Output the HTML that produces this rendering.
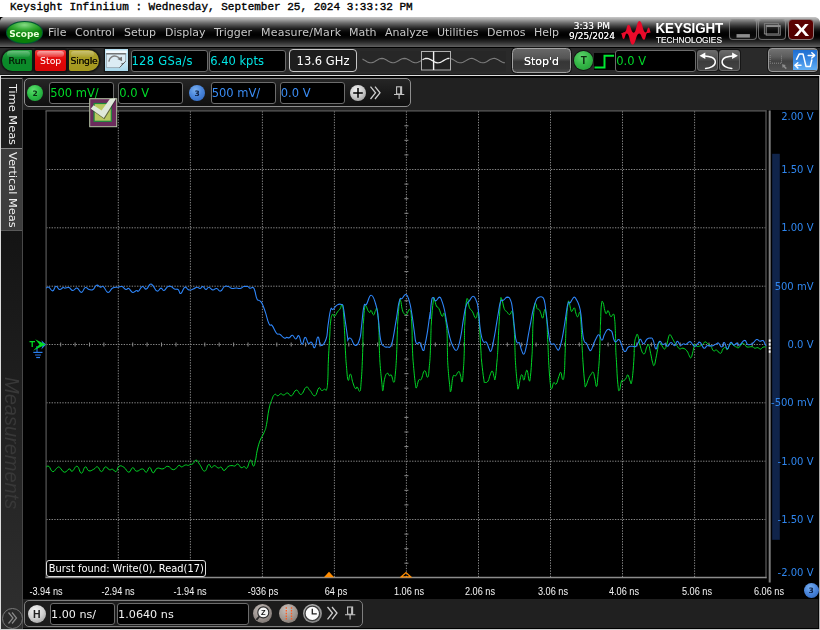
<!DOCTYPE html>
<html>
<head>
<meta charset="utf-8">
<title>Keysight Infiniium</title>
<style>
html,body{margin:0;padding:0;background:#000;}
body{width:820px;height:630px;overflow:hidden;position:relative;font-family:"DejaVu Sans","Liberation Sans",sans-serif;}
#root{position:absolute;left:0;top:0;width:820px;height:630px;overflow:hidden;background:#000;}
.abs{position:absolute;}
#title{left:0;top:0;width:820px;height:17px;background:#fff;color:#000;font-family:"Liberation Mono",monospace;font-size:11px;font-weight:normal;-webkit-text-stroke:0.35px #000;line-height:13px;white-space:pre;}
#title span{position:absolute;left:10px;top:0.5px;}
#menubar{left:0;top:17px;width:820px;height:30px;background:linear-gradient(to bottom,#cacaca 0px,#9c9c9c 3px,#6c6c6c 6px,#424242 9px,#1c1c1c 12px,#060606 15px,#000 18px,#080808 21px,#2a2a2a 25px,#4a4a4a 28px,#5c5c5c 29.5px,#5c5c5c 30px);}
.mi{position:absolute;top:25px;color:#c8c8c8;font-size:11px;line-height:16px;white-space:nowrap;}
#toolbar{left:0;top:47px;width:820px;height:28px;background:linear-gradient(to bottom,#000 0,#000 1px,#2a2a2a 1px,#2a2a2a 27px,#181818 27px);}
#sepline{left:0;top:75px;width:820px;height:3px;background:linear-gradient(to bottom,#dedede 0,#dedede 1px,#000 1px,#080808 3px);}
#chbar{left:0;top:78px;width:820px;height:32px;background:#212121;}
.box{position:absolute;background:#000;border:1px solid #6c6c6c;border-radius:3px;box-sizing:border-box;white-space:nowrap;overflow:hidden;}
.box span{position:absolute;left:0.2px;top:3px;font-size:11.5px;line-height:14px;}
#sidebar{left:0;top:77px;width:23px;height:553px;background:linear-gradient(to bottom,#141414 0,#141414 154px,#2f2f2f 553px);}
#plotarea{left:23px;top:110px;width:797px;height:489px;background:#000;}
#bottombar{left:23px;top:598.5px;width:797px;height:31.5px;background:linear-gradient(to bottom,#202020 0,#202020 29.2px,#000 29.2px,#000 30.5px);}
.tl{position:absolute;top:584.700px;width:60px;margin-left:-30px;text-align:center;color:#f4f4f4;font-size:10.8px;transform:scaleX(0.85);line-height:13px;font-family:"Liberation Sans",sans-serif;white-space:nowrap;}
.vl{position:absolute;right:6.5px;width:60px;text-align:right;color:#2f86ee;font-size:10px;line-height:13px;white-space:nowrap;}
.btn3 span{position:absolute;top:5px;font-size:9.3px;line-height:12px;}
.btn3 .hl{position:absolute;top:1px;height:6px;border-radius:6px;background:linear-gradient(to bottom,rgba(255,255,255,.30),rgba(255,255,255,.05));}
.wbtn{box-sizing:border-box;border:1px solid rgba(160,160,160,0.62);border-radius:4px;background:linear-gradient(to bottom,rgba(0,0,0,0.12) 0%,rgba(0,0,0,0.25) 50%,rgba(40,40,40,0.35) 100%);}
.gbtn{box-sizing:border-box;border:1px solid #6a6a6a;border-radius:3px;background:linear-gradient(to bottom,#6a6a6a 0%,#555 35%,#3c3c3c 55%,#444 100%);box-shadow:0 0 0 1px #161616;}
.cir{border-radius:50%;}
.cir span{position:absolute;left:0;top:3.5px;width:16px;text-align:center;font-size:7.5px;line-height:9px;font-weight:bold;}
.rot{transform-origin:0 0;transform:rotate(90deg);color:#f0f0f0;font-size:11.35px;line-height:14px;white-space:nowrap;}
</style>
</head>
<body>
<div id="root">
<div id="title" class="abs"><span>Keysight Infiniium : Wednesday, September 25, 2024 3:33:32 PM</span></div>
<div id="layer" class="abs" style="left:0;top:0;width:820px;height:630px;will-change:transform;">
<div id="menubar" class="abs"></div>
<div id="toolbar" class="abs"></div>
<div id="sepline" class="abs"></div>
<div id="chbar" class="abs"></div>
<div id="sidebar" class="abs"></div>
<div id="plotarea" class="abs"></div>
<div id="bottombar" class="abs"></div>
<svg class="abs" style="left:0;top:0" width="20" height="30" viewBox="0 0 20 30"><path d="M0,17H3.600C1.600,17.400 0.500,18.600 0,21Z" fill="#000"/></svg>
<div id="scope" class="abs" style="left:6.5px;top:22px;width:35.5px;height:20.700px;border-radius:50%;background:radial-gradient(ellipse 62% 42% at 50% 14%,#86da86 0%,#3aae3a 50%,rgba(20,130,20,0) 100%),#0a800a;box-shadow:0 0 0 1px #053;"><span style="position:absolute;left:0;top:5.5px;width:35.5px;text-align:center;font-size:9px;font-weight:bold;line-height:12px;color:#e8ffd8;letter-spacing:-0.1px;">Scope</span></div>
<span class="mi" style="left:48px">File</span>
<span class="mi" style="left:75px">Control</span>
<span class="mi" style="left:124px">Setup</span>
<span class="mi" style="left:165px">Display</span>
<span class="mi" style="left:214px">Trigger</span>
<span class="mi" style="left:261px;letter-spacing:0.22px">Measure/Mark</span>
<span class="mi" style="left:349px">Math</span>
<span class="mi" style="left:385px">Analyze</span>
<span class="mi" style="left:437px">Utilities</span>
<span class="mi" style="left:487px">Demos</span>
<span class="mi" style="left:534px">Help</span>
<svg class="abs" style="left:0;top:0" width="820" height="630" viewBox="0 0 820 630"><path d="M815.500,17H820V22C819.600,19.400 818,17.600 815.500,17Z" fill="#fff"/><path d="M818.700,76V630" stroke="#000" stroke-width="0.900"/><path d="M819.600,75V630" stroke="#d4d4d4" stroke-width="0.900"/></svg>
<!--MENU-->
<svg class="abs" style="left:0;top:0" width="820" height="630" viewBox="0 0 820 630"><path d="M620.76,33.29C622.82,33.29 622.82,31.92 624.88,31.92C626.66,31.92 626.66,24.78 628.45,24.78C631.05,24.78 631.05,32.74 633.66,32.74C636.54,32.74 636.54,20.94 639.42,20.94C642.58,20.94 642.58,32.47 645.74,32.47C647.24,32.47 647.24,27.53 648.75,27.53C649.85,27.53 649.85,32.19 650.95,32.19C649.17,32.19 649.17,33.01 647.38,33.01C645.74,33.01 645.74,39.87 644.09,39.87C641.62,39.87 641.62,33.56 639.15,33.56C635.86,33.56 635.86,44.81 632.56,44.81C629.68,44.81 629.68,33.56 626.80,33.56C625.15,33.56 625.15,39.05 623.51,39.05C622.14,39.05 622.14,33.29 620.76,33.29Z" fill="#ea0a2a"/></svg>
<div class="abs btn3" style="left:2.2px;top:50px;width:30.3px;height:21px;border-radius:10.5px 1px 2px 10.5px;background:linear-gradient(to bottom,#2fa84a 0%,#1a9a38 20%,#0b8a2a 45%,#0a8a28 100%);box-shadow:0 0 1.5px 1.5px #121212;"><i class="hl" style="left:5px;right:2px"></i><span style="color:#062009;left:6.3px;letter-spacing:0.1px;text-shadow:0 0 0.4px #062009">Run</span></div>
<div class="abs btn3" style="left:35.1px;top:50px;width:31.2px;height:21px;border-radius:2px;background:linear-gradient(to bottom,#f04040 0%,#e81818 25%,#e00808 50%,#d80606 100%);box-shadow:0 0 1.5px 1.5px #121212;"><i class="hl" style="left:2px;right:2px;background:linear-gradient(to bottom,rgba(255,255,255,.55),rgba(255,255,255,.15))"></i><span style="color:#fff;left:5px">Stop</span></div>
<div class="abs btn3" style="left:68.7px;top:50px;width:30.8px;height:21px;border-radius:1px 10.5px 10.5px 2px;background:linear-gradient(to bottom,#b4a838 0%,#aa9e26 30%,#a4981e 100%);box-shadow:0 0 1.5px 1.5px #121212;"><i class="hl" style="left:2px;right:5px"></i><span style="color:#141204;left:1.8px;letter-spacing:-0.25px;text-shadow:0 0 0.4px #141204">Single</span></div>
<div class="abs" style="left:105.100px;top:49.400px;width:22.600px;height:21.800px;background:linear-gradient(to bottom,#b4e0f2,#c8e8f6 60%,#a8d8ec);box-shadow:0 0 1px 1px #141414;"></div>
<svg class="abs" style="left:0;top:0" width="820" height="630" viewBox="0 0 820 630">
<rect x="105.800" y="50.400" width="21.400" height="2.600" fill="#fff" opacity="0.800"/>
<path d="M106.400,53.600H125.600V61.300L119.500,67.600H106.400Z" fill="#dcecf4" stroke="#8e9aa0" stroke-width="0.700"/>
<path d="M106.200,53.800H125.800" stroke="#6a6a6a" stroke-width="1.300"/>
<path d="M108.800,61.600C109.300,57 113.500,55.300 116.500,56.400C118.400,57.100 119.600,58.300 120.300,59.400" fill="none" stroke="#808080" stroke-width="1.500"/>
<path d="M117.300,58.900L121.900,56.800L122.100,61.300Z" fill="#707070"/>
<path d="M119.500,67.600L125.600,61.300" stroke="#555" stroke-width="0.900"/>
<path d="M121.300,63.500L124.300,63.200L121.600,64.500Z" fill="#333"/>
<rect x="360" y="51" width="146" height="20.5" fill="#272727"/>
<polyline points="362.5,59.1 364.0,59.9 365.5,60.8 367.0,61.7 368.5,62.4 370.0,62.8 371.5,62.8 373.0,62.4 374.5,61.7 376.0,60.8 377.5,59.9 379.0,59.1 380.5,58.6 382.0,58.4 383.5,58.6 385.0,59.2 386.5,60.0 388.0,60.9 389.5,61.7 391.0,62.4 392.5,62.8 394.0,62.7 395.5,62.3 397.0,61.6 398.5,60.8 400.0,59.8 401.5,59.1 403.0,58.6 404.5,58.4 406.0,58.6 407.5,59.2 409.0,60.0 410.5,60.9 412.0,61.8 413.5,62.4 415.0,62.8 416.5,62.7 418.0,62.3 419.5,61.6 421.0,60.7 422.5,59.8 424.0,59.0 425.5,58.5 427.0,58.4 428.5,58.7 430.0,59.3 431.5,60.1 433.0,61.0 434.5,61.9 436.0,62.5 437.5,62.8 439.0,62.7 440.5,62.3 442.0,61.5 443.5,60.6 445.0,59.7 446.5,59.0 448.0,58.5 449.5,58.4 451.0,58.7 452.5,59.3 454.0,60.1 455.5,61.1 457.0,61.9 458.5,62.5 460.0,62.8 461.5,62.7 463.0,62.2 464.5,61.5 466.0,60.6 467.5,59.7 469.0,58.9 470.5,58.5 472.0,58.4 473.5,58.7 475.0,59.4 476.5,60.2 478.0,61.1 479.5,62.0 481.0,62.5 482.5,62.8 484.0,62.7 485.5,62.2 487.0,61.4 488.5,60.5 490.0,59.6 491.5,58.9 493.0,58.5 494.5,58.4 496.0,58.8 497.5,59.4 499.0,60.3 500.5,61.2 502.0,62.0 503.5,62.6 505.0,62.8" fill="none" stroke="#7c7c7c" stroke-width="1.1"/>
<rect x="421.5" y="51.5" width="29" height="18.5" fill="#222" stroke="#b0b0b0" stroke-width="1"/>
<polyline points="422.5,59.8 424.0,59.0 425.5,58.5 427.0,58.4 428.5,58.7 430.0,59.3 431.5,60.1 433.0,61.0 434.5,61.9 436.0,62.5 437.5,62.8 439.0,62.7 440.5,62.3 442.0,61.5 443.5,60.6 445.0,59.7 446.5,59.0 448.0,58.5 449.5,58.4" fill="none" stroke="#f0f0f0" stroke-width="1.3"/>
<path d="M433.6,51.5V70" stroke="#f4f4f4" stroke-width="1.4"/>
</svg>
<div class="box" style="left:131px;top:50px;width:77px;height:22px;"><span style="color:#00e4e4;left:-0.5px;letter-spacing:0.28px">128 GSa/s</span></div>
<div class="box" style="left:209px;top:50px;width:77px;height:22px;"><span style="color:#00e4e4">6.40 kpts</span></div>
<div class="box" style="left:289px;top:49px;width:68px;height:23px;background:#1e1e1e;border:1.5px solid #c8c8c8;border-radius:4px;"><span style="color:#fff;left:0.5px;top:3.6px;width:65px;text-align:center;">13.6 GHz</span></div>
<div class="abs" style="left:512.200px;top:48px;width:59.200px;height:25.400px;box-sizing:border-box;border:1.300px solid #a2a2a2;border-radius:4.500px;background:linear-gradient(to bottom,#686868 0%,#555 40%,#363636 55%,#3a3a3a 85%,#4c4c4c 100%);box-shadow:0 0 0 1px #141414;"><span style="position:absolute;left:0;top:5.800px;width:56.600px;text-align:center;color:#fff;font-size:11px;line-height:14px;text-shadow:0 0 0.600px #fff;">Stop'd</span></div>
<div class="abs" style="left:574.200px;top:51.200px;width:19px;height:19px;box-shadow:0 0 0 1px #151515;border-radius:50%;background:radial-gradient(circle at 40% 30%,#5ed46c 0%,#36b848 45%,#1f9a34 100%);"><span style="position:absolute;left:0;top:4px;width:19px;text-align:center;font-size:10px;font-weight:bold;line-height:11px;color:#0c2a10;font-family:'Liberation Sans',sans-serif">T</span></div>
<div class="abs" style="left:594px;top:53px;width:21px;height:17px;background:#000"></div>
<svg class="abs" style="left:0;top:0" width="820" height="630" viewBox="0 0 820 630"><path d="M594.5,67.5H604.5V55.8H614" fill="none" stroke="#00e832" stroke-width="2"/></svg>
<div class="box" style="left:615px;top:50px;width:81px;height:22px;"><span style="color:#00d828">0.0 V</span></div>
<span class="abs" style="left:561px;top:19.5px;width:62px;text-align:center;color:#f2f2f2;font-size:9px;line-height:12px;text-shadow:0 0 0.5px #fff;white-space:nowrap">3:33 PM</span>
<span class="abs" style="left:561px;top:29.5px;width:62px;text-align:center;color:#f2f2f2;font-size:9px;line-height:12px;text-shadow:0 0 0.5px #fff;white-space:nowrap">9/25/2024</span>
<span id="ks1" class="abs" style="left:655.5px;top:20px;color:#fff;font-family:'Liberation Sans',sans-serif;font-weight:bold;font-size:13.4px;line-height:16px;letter-spacing:-0.1px;margin-top:1px;transform-origin:0 85%;transform:scaleY(1.09);white-space:nowrap">KEYSIGHT</span>
<span id="ks2" class="abs" style="left:656px;top:34.5px;color:#e4e4e4;font-family:'Liberation Sans',sans-serif;font-size:8.3px;line-height:11px;text-shadow:0 0 0.5px #e4e4e4;white-space:nowrap">TECHNOLOGIES</span>
<div class="abs wbtn" style="left:729.100px;top:19.400px;width:27.500px;height:20.500px;"></div>
<div class="abs wbtn" style="left:757.900px;top:19.400px;width:27.700px;height:20.500px;"></div>
<div class="abs wbtn" style="left:787.600px;top:19.400px;width:26.900px;height:20.400px;background:linear-gradient(to bottom,#5e0202,#560000 50%,#500000);border-color:#8c7c7c;"></div>
<svg class="abs" style="left:0;top:0" width="820" height="630" viewBox="0 0 820 630">
<rect x="736.500" y="34.100" width="13.400" height="3.500" fill="#8e8e8e"/>
<rect x="764.400" y="23.600" width="14" height="10.300" fill="none" stroke="#7c7c7c" stroke-width="1"/>
<rect x="766.200" y="25.600" width="14" height="9.500" fill="none" stroke="#8c8c8c" stroke-width="1"/>
<path d="M766.200,26.100H780.200" stroke="#8c8c8c" stroke-width="1.800"/>
<text transform="translate(801.600,36) scale(1.36,1)" x="0" y="0" text-anchor="middle" font-family="Liberation Sans, sans-serif" font-weight="bold" font-size="16.800" fill="#fff">X</text>
</svg>
<div class="abs gbtn" style="left:697.3px;top:50.2px;width:21px;height:20.6px;"></div>
<div class="abs gbtn" style="left:719.4px;top:50.2px;width:21px;height:20.6px;"></div>
<div class="abs gbtn" style="left:768.200px;top:48.200px;width:49.700px;height:24.200px;border-radius:4px;border-color:#989898;background:linear-gradient(to bottom,#727272 0%,#5c5c5c 35%,#434343 55%,#505050 100%);"></div>
<div class="abs" style="left:793px;top:50.400px;width:24.100px;height:19.800px;background:linear-gradient(to bottom,#1f6ed0 0%,#3888e2 50%,#62b0f6 100%);"></div>
<svg class="abs" style="left:0;top:0" width="820" height="630" viewBox="0 0 820 630">
<g fill="none" stroke="#fff" stroke-width="1.5" stroke-linecap="round">
<path d="M704.6,55.9C709,56 715.3,57.5 715.3,62C715.3,66 710,68.2 705.6,68.5"/>
<path d="M732.800,55.900C728.400,56 722.100,57.500 722.100,62C722.100,66 727.400,68.200 731.800,68.500"/>
</g>
<path d="M699.500,55.700L705.300,52.500L705.300,59Z" fill="#fff"/>
<path d="M737.900,55.700L732.100,52.500L732.100,59Z" fill="#fff"/>
<g stroke="#8a8a8a" stroke-width="1" stroke-dasharray="1,1" fill="none"><path d="M770.200,55V63.200H781.500V54.500"/></g>
<path d="M783.300,65.600L786.300,68.600" stroke="#8c8c8c" stroke-width="1.500"/><path d="M782,64.300L785.800,65L782.700,68.100Z" fill="#8c8c8c"/>
<g fill="none" stroke="#fff" stroke-width="1.500" stroke-linecap="round" stroke-linejoin="round">
<path d="M796.600,59.300L799.300,53.900H803L806,66.400H810.300L811.800,60"/>
<path d="M808.200,55.400H814.300"/><path d="M811.800,52.800L814.600,55.400L811.800,58"/>
<path d="M801,65.300H795.300"/><path d="M797.800,62.700L795,65.300L797.800,67.900"/>
</g>
</svg>
<!--TOOLBAR-->
<div class="abs" style="left:24.2px;top:77.700px;width:386.500px;height:29.800px;box-sizing:border-box;border:1px solid #8e8e8e;border-radius:5px;background:linear-gradient(to bottom,#262626,#1a1a1a 50%,#101010);"></div>
<div class="abs cir" style="left:27px;top:85px;width:16px;height:16px;background:radial-gradient(circle at 40% 30%,#5fe070 0%,#2fc048 45%,#169032 100%);"><span style="color:#0a3014">2</span></div>
<div class="box" style="left:49px;top:82px;width:65px;height:22px;"><span style="color:#00dc28">500 mV/</span></div>
<div class="box" style="left:118px;top:82px;width:65px;height:22px;"><span style="color:#00dc28">0.0 V</span></div>
<div class="abs cir" style="left:189px;top:85px;width:16px;height:16px;background:radial-gradient(circle at 40% 30%,#7ab0f0 0%,#4a86dc 45%,#2a60b8 100%);"><span style="color:#0a1c40">3</span></div>
<div class="box" style="left:210.500px;top:82px;width:65.300px;height:22px;"><span style="color:#3a8cf4;left:0.2px">500 mV/</span></div>
<div class="box" style="left:279.5px;top:82px;width:65px;height:22px;"><span style="color:#3a8cf4;left:0.2px">0.0 V</span></div>
<div class="abs" style="left:350px;top:85px;width:16px;height:16px;border-radius:50%;background:radial-gradient(circle at 40% 30%,#f0f0f0 0%,#c8c8c8 50%,#8c8c8c 100%);"></div>
<svg class="abs" style="left:0;top:0" width="820" height="630" viewBox="0 0 820 630">
<path d="M353.200,92.900H362.800M358,88.100V97.700" stroke="#000" stroke-width="1.500"/>
<g fill="none" stroke="#cfcfcf" stroke-width="1.3"><path d="M370.5,86.7L375.5,92.8L370.5,99"/><path d="M375,86.7L380,92.8L375,99"/></g>
<g fill="none" stroke="#c4c4c4" stroke-width="1.1"><rect x="396.600" y="86.800" width="5" height="7.200"/><path d="M394,94.500H404.300M399.100,95V99"/></g>
<path d="M400.800,87V94" stroke="#c4c4c4" stroke-width="1.400"/>
</svg>
<div class="abs" style="left:0;top:75px;width:0.8px;height:555px;background:#dcdcdc"></div>
<div class="abs" style="left:21.900px;top:78px;width:1.200px;height:552px;background:#484848"></div>
<div class="abs" style="left:1.200px;top:77.800px;width:21px;height:70.200px;box-sizing:border-box;background:#1e1e1e;border-top:1px solid #8a8a8a;"></div>
<div class="abs" style="left:1.200px;top:148px;width:21px;height:82.500px;box-sizing:border-box;background:#3d3d3d;border-top:1px solid #888;border-bottom:1.200px solid #5a5a5a"></div>
<span class="abs rot" style="left:20px;top:84.3px;">Time Meas</span>
<span class="abs rot" style="left:20px;top:151.900px;">Vertical Meas</span>
<span class="abs" style="left:22px;top:377px;transform-origin:0 0;transform:rotate(90deg);font-family:'Liberation Sans',sans-serif;font-style:italic;font-size:20px;line-height:20px;color:#383838;white-space:nowrap">Measurements</span>
<!--CHBAR-->
<!--PLOTSTART-->
<svg class="abs" style="left:0;top:0" width="820" height="630" viewBox="0 0 820 630">
<path d="M118.3,111.2V577.8M190.4,111.2V577.8M262.4,111.2V577.8M334.4,111.2V577.8M406.4,111.2V577.8M478.5,111.2V577.8M550.5,111.2V577.8M622.5,111.2V577.8M694.6,111.2V577.8M46.3,169.5H766.6M46.3,227.8H766.6M46.3,286.2H766.6M46.3,344.5H766.6M46.3,402.8H766.6M46.3,461.2H766.6M46.3,519.5H766.6" fill="none" stroke="#929292" stroke-width="0.95" stroke-dasharray="1.3,1.37"/>
<path d="M60.7,342.5v4M75.1,342.5v4M89.5,342.5v4M103.9,342.5v4M132.7,342.5v4M147.1,342.5v4M161.5,342.5v4M176.0,342.5v4M204.8,342.5v4M219.2,342.5v4M233.6,342.5v4M248.0,342.5v4M276.8,342.5v4M291.2,342.5v4M305.6,342.5v4M320.0,342.5v4M348.8,342.5v4M363.2,342.5v4M377.6,342.5v4M392.0,342.5v4M420.9,342.5v4M435.3,342.5v4M449.7,342.5v4M464.1,342.5v4M492.9,342.5v4M507.3,342.5v4M521.7,342.5v4M536.1,342.5v4M564.9,342.5v4M579.3,342.5v4M593.7,342.5v4M608.1,342.5v4M636.9,342.5v4M651.4,342.5v4M665.8,342.5v4M680.2,342.5v4M709.0,342.5v4M723.4,342.5v4M737.8,342.5v4M752.2,342.5v4M404.4,125.8h4M404.4,140.3h4M404.4,154.9h4M404.4,184.1h4M404.4,198.7h4M404.4,213.3h4M404.4,242.4h4M404.4,257.0h4M404.4,271.6h4M404.4,300.8h4M404.4,315.3h4M404.4,329.9h4M404.4,359.1h4M404.4,373.7h4M404.4,388.2h4M404.4,417.4h4M404.4,432.0h4M404.4,446.6h4M404.4,475.7h4M404.4,490.3h4M404.4,504.9h4M404.4,534.1h4M404.4,548.7h4M404.4,563.2h4" fill="none" stroke="#8c8c8c" stroke-width="1"/>
<path d="M46.1,110.9V577.8" stroke="#505050" stroke-width="1.3" fill="none"/>
<path d="M45.5,110.9H766.6" stroke="#606060" stroke-width="1.1" fill="none"/>
<path d="M766.0,110.4V578.2" stroke="#505050" stroke-width="1.4" fill="none"/>
<path d="M45.5,577.5H766.6" stroke="#8c8c8c" stroke-width="1.3" fill="none"/>
<path d="M769.7,110.4V582.5" stroke="#7c7c7c" stroke-width="2"/>
<path d="M769.7,339.5V354" stroke="#fff" stroke-width="1.8" stroke-dasharray="2.2,1.5"/>
<rect x="772.2" y="153.8" width="7.6" height="386" fill="#10244a"/>
<path d="M46.2,467.3C46.9,467.1 47.1,465.3 48.8,466.3C50.4,467.4 50.7,471.1 52.7,471.6C54.7,472.1 54.9,469.4 56.6,468.3C58.3,467.2 57.5,466.3 59.5,467.3C61.5,468.3 61.9,471.8 64.4,472.2C66.9,472.6 67.3,469.1 69.3,468.9C71.2,468.6 70.2,471.9 72.2,471.2C74.2,470.6 74.7,465.8 77.1,466.3C79.4,466.8 79.3,473.0 81.4,473.2C83.4,473.3 83.4,467.5 85.3,466.9C87.1,466.3 86.7,470.2 88.8,470.8C90.9,471.4 91.4,470.3 93.7,469.3C95.9,468.3 95.6,466.3 97.6,466.9C99.5,467.5 99.5,471.6 101.5,471.6C103.4,471.6 103.4,467.4 105.4,466.9C107.3,466.4 107.4,469.1 109.3,469.7C111.1,470.3 110.9,468.8 112.6,469.3C114.3,469.8 114.5,472.4 116.1,471.6C117.7,470.9 117.0,467.4 119.0,466.3C121.0,465.3 121.4,465.8 123.9,467.3C126.4,468.8 126.6,472.1 128.8,472.2C131.0,472.3 130.7,468.0 132.7,467.7C134.7,467.5 134.1,470.9 136.6,471.2C139.1,471.5 140.0,468.6 142.4,468.9C144.9,469.1 144.5,472.6 146.3,472.2C148.2,471.8 147.9,467.2 149.7,467.3C151.4,467.5 151.3,472.5 153.2,472.8C155.0,473.0 154.6,469.3 157.1,468.3C159.5,467.3 160.2,469.4 162.9,468.9C165.6,468.4 165.1,466.1 167.8,466.3C170.5,466.5 170.8,469.9 173.7,469.7C176.5,469.4 176.9,466.1 178.9,465.4C180.9,464.7 179.8,467.0 181.5,466.9C183.1,466.8 183.6,465.4 185.4,465.0C187.1,464.6 187.1,465.5 188.3,465.4C189.5,465.3 188.8,465.1 190.0,464.6C191.2,464.2 191.3,464.8 192.9,463.7C194.5,462.5 194.5,459.9 196.2,460.1C198.0,460.4 197.6,461.9 199.8,464.6C201.9,467.4 202.4,471.1 204.6,471.1C206.9,471.1 206.8,465.5 208.5,464.6C210.3,463.7 210.0,467.3 211.5,467.6C212.9,467.8 212.7,465.5 214.4,465.6C216.1,465.7 216.6,467.6 218.3,468.0C220.0,468.3 219.7,466.5 221.2,467.2C222.7,467.8 222.4,470.6 224.1,470.5C225.9,470.3 226.1,467.8 228.0,466.6C230.0,465.3 230.2,465.8 232.0,465.6C233.7,465.5 233.4,466.4 234.9,466.0C236.4,465.6 236.2,463.7 237.8,464.0C239.4,464.4 239.5,466.9 241.1,467.6C242.8,468.2 242.8,466.5 244.2,466.6C245.7,466.7 245.4,469.6 247.0,468.0C248.6,466.3 248.9,460.6 250.5,460.1C252.1,459.7 252.2,465.9 253.4,466.0C254.7,466.1 254.4,464.8 255.4,460.7C256.4,456.7 256.1,455.2 257.3,450.0C258.6,444.8 258.5,444.7 260.2,440.2C262.0,435.8 262.6,436.4 264.1,432.4C265.7,428.5 265.3,430.6 266.5,424.6C267.7,418.7 267.6,415.5 269.0,409.0C270.4,402.6 270.5,403.0 272.0,399.3C273.4,395.6 273.4,395.3 274.9,394.4C276.4,393.5 276.3,395.9 277.8,395.8C279.3,395.6 279.2,394.0 280.7,393.8C282.2,393.6 281.9,395.2 283.7,395.0C285.4,394.8 285.6,392.8 287.6,393.0C289.5,393.2 289.2,396.5 291.5,395.8C293.7,395.0 293.9,390.4 296.3,390.1C298.8,389.8 298.7,395.1 301.2,394.4C303.7,393.6 303.9,388.2 306.1,387.2C308.3,386.2 307.8,388.3 310.0,390.5C312.2,392.7 312.7,396.4 314.9,395.8C317.1,395.1 317.1,389.3 318.8,388.0C320.5,386.6 320.2,390.2 321.7,390.5C323.2,390.8 323.4,389.4 324.6,389.1C325.9,388.9 325.8,391.9 326.6,389.5C327.4,387.1 327.3,387.2 327.8,379.8C328.2,372.3 327.9,370.8 328.4,359.9C328.9,349.1 329.1,346.8 329.7,337.1C330.2,327.5 329.9,327.7 330.6,321.9C331.3,316.1 331.5,315.6 332.5,314.3C333.5,312.9 333.1,317.2 334.4,316.5C335.7,315.9 336.1,313.7 337.6,311.7C339.0,309.8 339.0,310.7 340.1,308.9C341.2,307.2 341.2,304.4 342.0,304.7C342.8,305.1 342.6,303.9 343.3,310.5C343.9,317.0 344.0,320.7 344.5,330.8C345.1,340.8 344.9,341.4 345.4,350.2C345.9,359.1 345.7,358.0 346.4,365.6C347.1,373.2 347.2,378.0 348.1,380.1C349.1,382.3 349.2,373.5 350.4,374.1C351.6,374.8 351.6,379.0 352.9,382.7C354.2,386.4 354.4,387.6 355.5,388.7C356.6,389.7 356.1,386.3 357.2,387.0C358.3,387.6 358.8,392.3 359.8,391.2C360.8,390.1 360.4,391.3 361.1,382.7C361.8,374.0 362.0,370.2 362.5,357.1C363.0,343.9 362.8,339.7 363.1,330.8C363.3,321.8 363.1,327.8 363.5,321.9C363.9,315.9 364.1,311.3 364.7,307.3C365.4,303.3 365.2,305.2 366.0,306.0C366.8,306.8 367.0,308.8 367.9,310.5C368.9,312.1 369.0,312.4 369.8,312.4C370.6,312.4 370.1,309.8 371.1,310.5C372.1,311.1 372.5,314.9 373.6,314.9C374.8,314.9 374.6,311.7 375.5,310.5C376.4,309.2 376.4,306.0 377.2,309.8C378.0,313.7 378.1,315.4 378.7,325.7C379.3,335.9 379.0,340.1 379.4,350.2C379.8,360.4 379.6,357.0 380.2,365.6C380.9,374.3 381.3,378.1 382.0,384.4C382.6,390.7 382.3,391.7 383.0,390.4C383.6,389.1 383.5,383.6 384.5,379.3C385.6,374.9 385.8,374.2 387.1,373.3C388.4,372.4 388.6,375.4 389.6,375.9C390.7,376.3 390.3,373.4 391.3,375.0C392.4,376.6 392.9,382.6 393.9,382.3C394.9,382.1 394.6,380.5 395.3,374.1C395.9,367.7 395.9,368.1 396.5,357.1C397.0,346.1 397.0,339.7 397.4,330.8C397.7,321.8 397.4,329.1 397.7,321.9C398.3,314.6 398.7,307.5 399.4,302.2C400.1,296.9 400.0,299.2 400.7,300.9C401.4,302.7 401.3,306.0 402.2,309.2C403.1,312.4 403.0,312.3 404.1,313.6C405.2,314.9 405.2,315.2 406.6,314.3C408.1,313.3 408.5,307.9 409.8,309.8C411.1,311.8 411.0,311.6 411.7,321.9C412.4,332.1 412.0,339.2 412.5,350.2C413.0,361.3 412.8,357.4 413.5,365.6C414.2,373.8 414.5,377.1 415.2,382.7C416.0,388.3 415.6,388.5 416.4,387.8C417.3,387.2 417.5,382.3 418.7,380.1C419.9,378.0 419.7,381.6 421.2,379.3C422.7,376.9 423.0,371.3 424.6,370.7C426.3,370.2 426.5,378.5 427.7,377.2C428.9,375.9 428.7,372.4 429.4,365.6C430.1,358.8 430.0,359.1 430.4,350.2C430.8,341.4 430.8,337.9 431.0,330.8C431.2,323.6 431.0,329.4 431.4,321.9C431.9,314.3 432.5,306.6 433.3,300.9C434.1,295.3 433.7,298.4 434.5,299.7C435.3,301.0 435.3,303.8 436.4,306.0C437.5,308.3 437.5,306.0 438.9,308.6C440.3,311.1 440.8,315.0 442.1,316.2C443.3,317.4 443.1,312.4 444.0,313.2C444.8,314.1 444.7,314.3 445.5,319.3C446.3,324.4 446.6,325.5 447.1,333.3C447.4,341.1 447.2,342.1 447.4,350.2C447.6,358.4 447.4,357.0 447.9,365.6C448.5,374.3 448.9,377.9 449.6,384.4C450.4,390.9 450.0,393.2 450.8,391.2C451.7,389.3 451.8,380.6 453.0,376.7C454.3,372.8 454.2,377.2 455.6,375.9C457.0,374.6 457.5,371.8 458.7,371.6C459.9,371.4 459.5,372.4 460.4,375.0C461.3,377.6 461.4,382.9 462.1,381.8C462.8,380.7 462.7,378.7 463.3,370.7C463.9,362.7 464.0,360.4 464.3,350.2C464.5,340.1 464.4,337.9 464.5,330.8C464.7,323.6 464.5,329.0 464.9,321.9C465.3,314.8 465.4,308.6 466.2,302.8C466.9,297.1 467.0,298.2 467.8,299.3C468.6,300.4 468.2,304.1 469.3,307.3C470.5,310.4 470.9,309.0 472.5,311.7C474.1,314.5 474.3,317.9 475.7,318.1C477.1,318.2 477.1,311.4 478.0,312.4C478.9,313.3 478.5,312.3 479.2,321.9C480.0,331.5 480.2,340.0 480.9,350.2C481.5,360.5 481.0,354.8 481.7,362.2C482.5,369.5 483.0,374.2 483.8,379.3C484.6,384.4 483.9,381.9 485.0,382.3C486.1,382.8 486.8,382.8 488.1,381.0C489.3,379.1 489.0,377.5 490.1,375.0C491.2,372.5 491.3,370.6 492.3,371.1C493.3,371.5 493.3,374.8 494.0,376.7C494.8,378.6 494.5,382.1 495.2,378.4C496.0,374.7 496.3,369.3 496.9,362.2C497.6,355.1 497.3,358.2 497.8,350.2C498.2,342.3 498.3,337.9 498.7,330.8C499.0,323.6 498.7,329.3 499.2,321.9C499.6,314.5 499.8,307.4 500.4,301.6C501.1,295.8 500.7,297.3 501.7,299.0C502.7,300.8 503.0,305.3 504.2,308.6C505.5,311.8 505.4,310.2 506.8,311.7C508.2,313.2 508.3,314.6 509.7,314.5C511.1,314.5 511.3,309.6 512.2,311.5C513.2,313.3 512.9,316.0 513.5,321.9C514.1,327.7 514.1,327.4 514.5,334.6C514.9,341.8 514.7,342.4 515.0,350.2C515.3,358.1 515.1,357.0 515.7,365.6C516.3,374.3 516.7,378.7 517.4,384.4C518.1,390.1 517.7,389.9 518.4,388.1C519.2,386.4 519.5,380.9 520.5,377.6C521.4,374.2 521.3,374.4 522.2,375.0C523.1,375.6 523.0,380.6 523.9,380.1C524.8,379.7 524.7,375.7 525.6,373.3C526.5,370.9 526.5,369.0 527.3,370.7C528.2,372.5 528.2,378.6 529.0,380.1C529.8,381.6 529.7,382.5 530.4,376.7C531.1,370.9 531.4,364.6 531.9,357.1C532.4,349.5 532.2,352.9 532.4,346.8C532.6,340.8 532.5,339.6 532.7,333.3C532.8,327.0 532.7,329.0 533.1,321.9C533.6,314.8 533.9,309.9 534.6,305.4C535.3,300.9 535.2,303.3 535.9,304.1C536.5,304.9 536.3,307.1 537.1,308.6C538.0,310.0 538.3,308.5 539.3,309.8C540.3,311.1 540.0,311.5 540.9,313.6C541.8,315.7 542.0,318.6 542.8,318.1C543.6,317.6 543.5,313.7 544.1,311.7C544.8,309.8 544.7,307.9 545.4,310.5C546.1,313.0 546.4,315.1 546.9,321.9C547.5,328.6 547.2,329.9 547.5,337.1C547.9,344.3 547.9,343.0 548.2,350.2C548.5,357.5 548.4,357.4 548.9,365.6C549.4,373.8 549.6,376.8 550.2,382.7C550.9,388.5 550.7,388.7 551.6,388.7C552.5,388.7 552.5,383.9 553.7,382.7C554.8,381.5 554.9,385.6 556.2,384.0C557.5,382.5 557.6,379.6 558.8,376.7C559.9,373.8 559.9,371.8 560.8,372.4C561.8,373.1 561.7,378.8 562.5,379.3C563.4,379.7 563.6,380.6 564.2,374.1C564.9,367.7 564.7,364.0 565.1,353.7C565.5,343.3 565.5,341.4 565.8,333.3C566.1,325.2 565.8,329.4 566.3,321.9C566.9,314.3 567.2,308.3 568.0,303.5C568.7,298.7 568.6,301.6 569.2,302.8C569.9,304.1 569.9,306.4 570.5,308.6C571.2,310.7 570.8,311.6 571.8,311.5C572.7,311.3 573.3,307.5 574.3,307.9C575.3,308.3 575.0,310.7 575.8,313.0C576.7,315.2 576.7,317.0 577.7,316.8C578.8,316.6 579.1,311.1 579.9,312.4C580.7,313.6 580.5,315.6 580.9,321.9C581.4,328.1 581.3,329.9 581.7,337.1C582.0,344.3 582.0,343.9 582.3,350.2C582.7,356.6 582.4,354.0 583.0,362.2C583.6,370.4 584.0,376.6 584.7,382.7C585.4,388.7 584.8,387.2 585.8,386.1C586.8,385.0 587.3,381.4 588.7,378.4C590.0,375.4 590.1,375.7 591.2,374.1C592.4,372.6 592.3,371.1 593.3,372.4C594.2,373.7 594.1,375.7 595.0,379.3C595.8,382.8 595.9,387.7 596.7,386.4C597.5,385.1 597.4,381.6 598.1,374.1C598.7,366.7 598.9,367.4 599.4,357.1C600.0,346.7 599.9,342.2 600.2,333.3C600.5,324.4 600.3,329.3 600.6,321.9C600.9,314.5 600.8,308.9 601.5,304.1C602.1,299.3 602.3,301.2 603.1,302.8C604.0,304.5 604.0,307.7 604.8,310.5C605.6,313.2 605.4,313.6 606.3,313.6C607.2,313.7 607.1,310.0 608.2,310.7C609.3,311.5 609.5,315.6 610.7,316.5C612.0,317.4 612.3,313.9 613.3,314.3C614.2,314.6 614.0,313.2 614.5,318.1C615.1,322.9 615.1,325.1 615.4,333.3C615.8,341.5 615.5,342.9 615.8,350.2C616.1,357.6 616.0,353.5 616.5,362.2C617.0,370.8 617.1,377.3 617.9,384.4C618.6,391.5 618.4,391.2 619.4,390.4C620.3,389.5 620.4,383.4 621.6,381.0C622.8,378.5 622.8,381.4 624.0,380.6C625.2,379.9 625.2,379.3 626.2,377.9C627.2,376.5 626.9,374.2 627.9,375.0C628.9,375.8 629.2,379.0 630.1,381.0C631.1,382.9 630.8,385.3 631.5,382.7C632.2,380.1 632.4,378.1 633.1,370.7C633.7,363.4 633.9,358.7 634.2,353.7C634.2,348.6 634.2,353.7 634.2,350.8C634.4,347.8 634.3,345.4 634.7,341.9C635.2,338.3 635.4,338.7 636.0,336.8C636.7,334.9 636.6,333.9 637.3,334.3C637.9,334.6 637.7,334.9 638.6,338.1C639.4,341.3 639.1,342.9 640.5,347.0C641.8,351.0 642.4,353.9 644.0,353.9C645.6,353.9 645.6,349.2 646.8,347.0C648.0,344.7 647.7,343.4 648.7,345.1C649.7,346.7 649.6,349.0 650.6,353.3C651.6,357.6 651.6,359.1 652.5,362.2C653.4,365.2 653.3,366.3 654.2,365.4C655.0,364.4 655.1,362.4 655.9,358.4C656.8,354.4 656.8,353.4 657.6,349.5C658.3,345.6 658.1,344.6 658.9,343.1C659.7,341.7 659.8,342.8 660.8,343.8C661.7,344.7 661.6,345.7 662.7,347.0C663.7,348.2 663.8,349.5 664.8,348.9C665.9,348.2 665.9,347.5 666.9,344.4C667.8,341.4 667.8,339.2 668.6,336.8C669.5,334.4 669.4,334.6 670.3,334.9C671.2,335.2 671.1,336.1 672.2,338.1C673.3,340.0 673.4,340.4 674.7,342.5C676.0,344.6 676.0,344.7 677.3,346.3C678.5,347.9 678.4,348.4 679.8,348.9C681.2,349.3 681.2,347.7 683.0,348.2C684.7,348.7 685.2,348.8 686.8,350.8C688.4,352.7 688.3,354.1 689.3,355.8C690.4,357.6 690.2,358.4 691.0,357.7C691.8,357.1 691.8,355.9 692.5,353.3C693.2,350.7 693.3,349.8 693.8,347.6C694.3,345.3 693.8,344.7 694.4,344.4C695.3,344.1 695.5,345.9 697.0,346.3C698.4,346.7 698.7,346.4 700.2,345.9C701.6,345.5 701.4,345.4 702.7,344.4C704.0,343.4 703.9,342.0 705.2,341.9C706.5,341.7 706.3,342.7 707.8,343.8C709.2,344.9 709.5,344.6 710.9,346.3C712.4,348.1 712.0,349.8 713.5,350.8C714.9,351.7 714.9,349.5 716.6,350.1C718.4,350.8 718.8,353.6 720.5,353.3C722.1,353.0 721.7,350.3 723.0,348.9C724.3,347.4 724.4,347.4 725.5,347.6C726.7,347.7 726.2,350.5 727.4,349.5C728.7,348.5 729.0,344.7 730.6,343.8C732.2,342.8 732.3,344.9 733.8,345.7C735.2,346.5 735.0,346.5 736.3,347.0C737.6,347.4 737.4,348.4 738.9,347.6C740.3,346.8 740.6,344.6 742.0,343.8C743.5,343.0 743.3,343.6 744.6,344.4C745.9,345.2 745.2,346.4 747.1,347.0C749.0,347.5 750.3,346.4 752.2,346.7C754.1,347.0 753.3,348.0 754.7,348.2C756.2,348.4 756.4,347.3 757.9,347.6C759.3,347.8 759.1,349.3 760.4,349.2C761.7,349.1 761.5,347.8 763.0,347.2C764.4,346.6 765.3,347.0 766.1,347.0" fill="none" stroke="#00d626" stroke-width="1.0" stroke-linejoin="round"/>
<path d="M46.2,288.0C46.9,287.8 47.1,286.4 48.8,287.2C50.4,287.9 50.9,291.1 52.7,290.9C54.5,290.6 54.3,286.5 56.0,286.2C57.7,285.8 57.7,289.2 59.5,289.5C61.3,289.9 61.6,287.9 63.0,287.6C64.4,287.2 63.5,288.1 65.0,288.1C66.5,288.1 66.9,287.0 68.9,287.6C70.9,288.2 70.7,290.3 72.8,290.5C74.9,290.6 74.9,287.7 77.1,288.1C79.2,288.6 79.3,292.6 81.4,292.4C83.4,292.3 83.3,288.3 85.3,287.6C87.2,286.8 87.2,289.0 89.2,289.5C91.1,290.0 91.2,290.6 93.1,289.5C95.0,288.4 94.7,285.8 96.6,285.2C98.5,284.6 98.8,286.8 100.5,287.2C102.2,287.5 101.5,285.3 103.4,286.6C105.3,287.9 105.6,292.0 107.9,292.4C110.2,292.8 110.0,289.5 112.6,288.1C115.2,286.8 115.7,287.6 118.0,287.2C120.4,286.8 120.0,286.0 122.0,286.6C123.9,287.2 124.1,289.0 125.9,289.5C127.6,290.0 127.1,287.8 128.8,288.5C130.5,289.3 130.7,291.9 132.7,292.4C134.7,292.9 135.1,290.8 136.6,290.5C138.1,290.1 137.1,292.1 138.5,291.1C140.0,290.1 140.5,287.1 142.4,286.6C144.4,286.1 144.4,289.7 146.3,289.1C148.3,288.5 148.5,285.0 150.2,284.2C152.0,283.5 151.4,284.3 153.2,286.0C154.9,287.7 155.1,290.5 157.1,291.1C159.1,291.6 159.2,288.3 161.0,288.1C162.7,288.0 162.2,290.9 163.9,290.5C165.6,290.1 166.0,287.6 167.8,286.6C169.6,285.6 169.4,285.9 171.1,286.6C172.9,287.2 172.9,288.4 174.6,289.1C176.4,289.9 176.6,288.4 178.1,289.5C179.7,290.6 179.2,294.0 180.9,293.4C182.6,292.8 182.8,288.1 184.8,287.2C186.8,286.3 186.6,289.4 188.7,289.9C190.8,290.4 191.0,289.8 193.2,289.1C195.3,288.4 195.3,287.3 197.1,287.2C198.8,287.0 198.5,288.7 200.0,288.5C201.5,288.4 201.4,286.3 202.9,286.6C204.4,286.8 204.4,289.4 205.9,289.5C207.3,289.7 207.1,287.1 208.8,287.2C210.5,287.3 210.7,289.6 212.7,289.9C214.7,290.2 214.6,288.2 216.6,288.5C218.6,288.8 218.5,291.6 220.5,291.1C222.5,290.6 222.4,287.7 224.4,286.6C226.4,285.4 226.3,286.1 228.3,286.6C230.3,287.1 230.2,288.2 232.2,288.5C234.2,288.9 234.1,288.0 236.1,288.0C238.1,288.0 238.0,288.9 240.0,288.5C242.0,288.2 241.9,287.1 243.9,286.6C245.9,286.1 246.3,286.2 247.8,286.6C249.3,287.0 248.6,288.0 250.0,288.2C251.4,288.5 252.0,287.0 253.2,287.6C254.4,288.3 253.9,287.9 254.8,290.8C255.8,293.7 255.8,296.6 257.0,299.0C258.2,301.5 258.2,299.4 259.5,300.6C260.8,301.7 260.6,300.6 262.1,303.5C263.5,306.3 263.5,306.6 265.2,311.7C267.0,316.9 267.3,320.2 269.0,323.8C270.8,327.3 270.3,323.3 272.2,325.7C274.1,328.1 274.7,331.1 276.6,333.3C278.6,335.5 277.9,333.1 279.8,334.3C281.8,335.5 282.5,337.4 284.3,338.1C286.0,338.9 285.5,337.5 286.8,337.4C288.1,337.3 287.9,338.3 289.3,337.7C290.8,337.2 290.9,334.9 292.5,335.2C294.1,335.5 294.1,338.8 295.7,339.0C297.3,339.2 297.3,334.6 298.9,335.8C300.5,337.1 300.4,343.7 302.0,344.1C303.6,344.5 303.6,337.5 305.2,337.4C306.8,337.2 306.8,342.2 308.4,343.5C310.0,344.7 309.9,341.2 311.5,342.2C313.2,343.2 313.1,348.8 314.7,347.5C316.3,346.2 316.3,337.7 317.9,337.1C319.5,336.6 319.0,344.9 321.1,345.4C323.2,345.8 324.4,344.0 326.1,339.0C327.9,334.0 326.9,333.1 328.0,325.7C329.2,318.3 329.3,313.9 330.6,309.8C331.9,305.7 331.5,310.6 333.1,309.4C334.7,308.3 334.8,306.4 336.9,305.1C339.0,303.8 339.8,303.8 341.4,304.4C343.0,304.9 342.3,303.2 343.3,307.3C344.2,311.4 344.1,312.7 345.2,320.6C346.3,328.5 347.0,333.6 347.7,338.4C347.9,343.2 347.7,339.6 347.9,339.6C348.6,339.6 348.9,336.9 350.8,338.4C352.7,339.8 353.0,345.2 355.2,345.4C357.5,345.5 358.1,344.0 359.7,339.0C361.3,334.0 360.5,333.9 361.6,325.7C362.6,317.5 362.6,312.1 363.9,306.6C365.1,301.2 364.8,307.0 366.6,304.1C368.5,301.2 368.8,295.4 371.1,295.2C373.3,295.1 373.8,298.0 375.5,303.5C377.3,308.9 376.8,307.6 378.1,316.8C379.4,326.0 379.2,332.3 380.6,339.6C382.1,347.0 382.0,344.1 383.8,346.0C385.5,347.9 385.8,347.0 387.6,347.0C389.4,347.0 389.3,348.5 390.8,346.0C392.2,343.5 391.9,344.2 393.3,337.1C394.7,330.0 394.9,327.2 396.5,318.1C398.0,308.9 397.9,305.9 399.4,300.9C400.8,296.0 400.5,300.0 402.2,298.4C403.9,296.8 404.2,294.0 406.0,294.6C407.8,295.2 407.7,296.3 409.2,300.9C410.6,305.6 410.4,305.4 411.7,313.0C413.0,320.5 413.1,323.2 414.2,330.8C415.4,338.3 414.7,339.8 416.1,342.8C417.6,345.9 418.2,340.9 419.9,342.8C421.7,344.7 421.8,349.9 423.1,350.4C424.4,350.9 423.9,349.7 425.0,344.7C426.2,339.7 426.3,338.8 427.6,330.8C428.8,322.7 429.5,316.2 430.1,313.0C430.1,309.8 430.1,320.6 430.1,318.1C430.4,315.5 430.5,308.1 431.3,302.8C432.0,297.6 432.0,298.0 433.2,297.5C434.3,297.0 434.1,301.0 435.7,300.9C437.3,300.8 437.9,297.0 439.5,297.1C441.1,297.3 440.8,298.2 442.1,301.6C443.3,304.9 443.3,304.7 444.6,310.5C445.9,316.2 445.8,317.7 447.1,324.4C448.4,331.2 448.2,331.6 449.7,337.1C451.1,342.6 451.2,342.6 452.8,346.0C454.5,349.4 454.6,350.4 456.0,350.4C457.5,350.4 457.3,350.0 458.6,346.0C459.8,342.0 459.8,341.6 461.1,334.6C462.4,327.5 462.3,325.5 463.6,318.1C464.9,310.7 464.7,309.7 466.2,305.4C467.6,301.0 467.6,303.3 469.3,300.9C471.1,298.6 471.4,296.2 473.1,296.2C474.9,296.2 475.0,297.7 476.3,300.9C477.6,304.2 477.3,302.3 478.2,309.2C479.2,316.1 479.2,320.8 480.1,328.2C481.1,335.6 481.1,334.8 482.0,338.4C483.0,341.9 482.8,341.2 483.9,342.2C485.1,343.2 485.2,340.8 486.5,342.4C487.8,344.0 487.9,346.3 489.0,348.5C490.1,350.7 489.9,352.0 490.9,351.1C491.9,350.1 491.7,349.9 492.8,344.7C493.9,339.6 494.1,338.2 495.4,330.8C496.6,323.4 496.6,322.8 497.9,315.5C499.2,308.3 499.0,306.1 500.4,302.2C501.9,298.3 501.8,301.3 503.6,300.1C505.4,298.8 505.6,297.1 507.4,297.1C509.2,297.2 509.3,297.3 510.6,300.3C511.9,303.4 511.5,302.4 512.5,309.2C513.5,315.9 513.4,318.9 514.4,327.0C515.4,335.0 515.0,336.9 516.3,340.9C517.6,344.9 518.5,341.9 519.5,342.8C520.0,343.8 519.5,342.6 520.0,344.7C520.6,346.8 520.9,348.8 521.9,351.1C522.9,353.4 523.0,354.8 524.1,353.9C525.1,352.9 525.0,351.8 526.1,347.3C527.2,342.7 527.1,342.3 528.2,335.8C529.4,329.4 529.5,328.6 530.8,321.9C532.1,315.1 532.0,314.5 533.3,309.2C534.6,303.9 534.6,303.9 535.9,300.9C537.1,298.0 536.8,298.5 538.4,297.5C540.0,296.5 540.7,296.3 542.2,297.1C543.7,298.0 543.4,297.2 544.4,300.9C545.3,304.6 545.1,304.8 546.0,311.7C546.9,318.6 547.0,320.8 547.9,328.2C548.9,335.6 548.9,336.9 549.8,340.9C550.8,344.9 550.6,343.3 551.7,344.1C552.9,344.9 553.0,343.0 554.3,344.1C555.5,345.2 555.7,347.1 556.8,348.5C557.9,350.0 557.7,350.8 558.7,349.8C559.7,348.8 559.5,348.9 560.6,344.7C561.7,340.5 561.9,340.4 563.1,333.3C564.4,326.2 564.5,324.4 565.7,316.8C566.9,309.2 566.8,307.0 568.0,303.5C569.1,299.9 569.1,303.8 570.1,302.8C571.2,301.9 571.0,301.1 572.0,299.7C573.1,298.2 573.2,297.1 574.3,297.1C575.4,297.1 575.3,297.6 576.5,299.7C577.7,301.8 577.9,301.7 579.0,305.4C580.1,309.1 580.0,307.8 580.9,314.3C581.8,320.7 581.6,324.0 582.4,330.8C583.2,337.5 583.0,337.7 584.1,340.9C585.1,344.1 585.3,341.4 586.6,343.5C587.9,345.5 588.0,347.5 589.2,349.2C590.3,350.8 590.0,351.2 591.1,350.1C592.1,348.9 592.1,347.7 593.4,344.7C594.6,341.8 594.7,340.9 596.1,338.4C597.6,335.9 597.5,334.3 598.9,334.8C600.4,335.3 600.5,340.3 601.9,340.3C603.2,340.2 603.1,337.1 604.4,334.6C605.7,332.0 605.6,331.4 606.9,330.1C608.2,328.8 608.7,329.4 609.5,329.5C610.0,329.6 609.5,329.9 610.0,330.5C610.6,331.0 610.9,329.5 611.9,331.7C612.9,334.0 612.8,336.8 613.8,339.3C614.8,341.9 614.4,341.8 615.7,341.9C617.0,341.9 617.4,339.0 618.9,339.6C620.3,340.2 620.3,341.9 621.4,344.4C622.5,346.9 622.3,347.7 623.3,349.5C624.4,351.3 624.2,352.0 625.5,351.4C626.8,350.8 626.7,348.2 628.4,347.0C630.1,345.7 630.3,346.5 632.2,346.3C634.1,346.2 634.4,347.4 636.0,346.3C637.6,345.2 637.4,343.6 638.6,341.9C639.7,340.1 639.2,338.9 640.5,339.3C641.7,339.8 642.0,343.8 643.6,343.8C645.2,343.8 645.0,340.8 646.8,339.3C648.6,337.9 649.0,337.9 650.6,338.1C652.2,338.2 651.9,337.2 653.1,340.0C654.4,342.7 654.5,347.9 655.7,348.9C656.9,349.8 656.8,345.7 658.0,343.8C659.1,341.9 658.9,341.1 660.1,341.2C661.3,341.4 661.4,343.8 662.7,344.4C664.0,345.1 663.9,343.3 665.2,343.8C666.5,344.3 666.3,346.6 667.7,346.3C669.2,346.0 669.1,342.7 670.9,342.5C672.7,342.4 673.1,346.0 674.7,345.7C676.3,345.4 675.8,341.4 677.3,341.2C678.7,341.1 678.8,344.4 680.4,345.1C682.0,345.7 682.2,343.9 683.6,343.8C685.1,343.6 684.5,345.0 686.1,344.4C687.7,343.9 688.3,341.6 689.9,341.6C691.6,341.6 691.2,343.2 692.5,344.4C693.8,345.6 693.8,346.5 695.1,346.3C696.4,346.2 696.3,344.7 697.6,343.8C698.9,342.8 698.5,341.4 700.2,342.5C701.8,343.6 702.2,347.4 704.0,348.2C705.7,349.0 705.5,346.3 707.1,345.7C708.7,345.1 708.7,346.0 710.3,345.9C711.9,345.9 711.9,346.0 713.5,345.4C715.1,344.9 715.4,344.4 716.6,343.8C717.9,343.2 717.3,342.3 718.6,343.1C719.8,344.0 720.3,347.1 721.7,347.0C723.2,346.8 722.8,342.0 724.3,342.5C725.7,343.0 725.8,348.9 727.4,348.9C729.0,348.9 729.0,343.5 730.6,342.5C732.2,341.5 732.2,344.9 733.8,345.1C735.4,345.2 735.5,343.1 737.0,343.1C738.4,343.1 737.6,345.8 739.5,345.1C741.4,344.3 742.5,340.5 744.6,340.4C746.7,340.2 745.8,343.5 747.7,344.4C749.7,345.3 749.9,345.0 752.2,343.8C754.4,342.6 754.7,340.2 756.6,339.6C758.6,339.0 758.2,341.0 759.8,341.2C761.4,341.5 761.7,340.0 763.0,340.6C764.3,341.3 764.1,342.5 764.9,343.8C765.7,345.1 765.8,345.2 766.1,345.7" fill="none" stroke="#2e86fa" stroke-width="1.08" stroke-linejoin="round"/>
<path d="M323.9,577.3L329,571.8L334.1,577.3Z" fill="#ff8c00"/>
<path d="M401.3,576.8L406,572.6L410.7,576.8Z" fill="none" stroke="#ff8c00" stroke-width="1.3"/>
<path d="M46,344.5L41.3,340.2L43,344.5L41.3,349.4Z" fill="#2a80f0"/>
<path d="M33.3,352.4H42.5" stroke="#2a80f0" stroke-width="1.2"/><path d="M35.1,355H40.9" stroke="#1c4a90" stroke-width="1.6"/><path d="M36.2,357.5H40" stroke="#2a80f0" stroke-width="1.2"/>
<path d="M37,346V352" stroke="#2a80f0" stroke-width="1"/>
<path d="M45.7,344.4L35.2,339.3L39.5,344.4L33,350.7Z" fill="#00dd22"/>
<path d="M29.5,341.7H35M32.2,341.7V347" stroke="#00dd22" stroke-width="1.3" fill="none"/>
</svg>
<!--PLOTEND-->
<!--PLOT-->
<span class="tl" style="left:46.0px">-3.94 ns</span>
<span class="tl" style="left:118.0px">-2.94 ns</span>
<span class="tl" style="left:189.6px">-1.94 ns</span>
<span class="tl" style="left:262.9px">-936 ps</span>
<span class="tl" style="left:336.2px">64 ps</span>
<span class="tl" style="left:408.5px">1.06 ns</span>
<span class="tl" style="left:480.2px">2.06 ns</span>
<span class="tl" style="left:552.5px">3.06 ns</span>
<span class="tl" style="left:624.3px">4.06 ns</span>
<span class="tl" style="left:697.3px">5.06 ns</span>
<span class="tl" style="left:769.3px">6.06 ns</span>
<span class="vl" style="top:110.0px">2.00 V</span>
<span class="vl" style="top:163.0px">1.50 V</span>
<span class="vl" style="top:221.3px">1.00 V</span>
<span class="vl" style="top:279.7px">500 mV</span>
<span class="vl" style="top:338.0px">0.0 V</span>
<span class="vl" style="top:396.3px">-500 mV</span>
<span class="vl" style="top:454.7px">-1.00 V</span>
<span class="vl" style="top:513.0px">-1.50 V</span>
<span class="vl" style="top:566.0px">-2.00 V</span>
<div class="abs cir" style="left:803.5px;top:583px;width:15px;height:15px;background:radial-gradient(circle at 40% 30%,#7ab0f0 0%,#4a86dc 45%,#2a60b8 100%);"><span style="color:#0a1c40;width:15px;top:3px">3</span></div>
<div class="abs" style="left:45.800px;top:560.300px;width:160.400px;height:16.800px;box-sizing:border-box;border:1px solid #dcdcdc;border-radius:3px;background:#000;"><span style="position:absolute;left:2px;top:2px;color:#fff;font-size:9.85px;line-height:12px;white-space:nowrap">Burst found: Write(0), Read(17)</span></div>
<svg class="abs" style="left:0;top:0" width="820" height="630" viewBox="0 0 820 630">
<rect x="89.7" y="98.7" width="27" height="28" fill="#6b2c5c" stroke="#b4c4a4" stroke-width="1"/>
<rect x="94.1" y="103.5" width="17.2" height="17.8" fill="#b9c862" stroke="#1c8a3c" stroke-width="1.2"/>
<path d="M91.5,110L94.3,106.5L102.3,112L110.3,100L115.8,99.5L116,100.6L104.4,119.2Z" fill="#2a2a2a" opacity="0.6"/>
<path d="M90.8,108.7L93.6,105.2L101.6,110.6L109.8,98.9L115.2,98.2L115.5,99.5L103.8,117.9Z" fill="#dfe9da"/>
</svg>
<!--LABELS-->
<div class="abs" style="left:0;top:629px;width:820px;height:1px;background:#cfcfcf"></div>
<div class="abs" style="left:1.5px;top:607.5px;width:21px;height:21px;box-sizing:border-box;border:1px solid #7a7a7a;border-radius:50%;background:#2a2a2a"></div>
<div class="abs" style="left:24px;top:600px;width:338.500px;height:26.800px;box-sizing:border-box;border:1px solid #7e7e7e;border-radius:5px;background:#1c1c1c;"></div>
<div class="abs" style="left:27.5px;top:604.5px;width:18.5px;height:18.5px;border-radius:50%;background:radial-gradient(circle at 40% 30%,#f4f4f4 0%,#cfcfcf 50%,#909090 100%);"><span style="position:absolute;left:0;top:4px;width:18.5px;text-align:center;font-size:10.5px;font-weight:bold;line-height:11px;color:#222;font-family:'Liberation Sans',sans-serif">H</span></div>
<div class="box" style="left:50px;top:603px;width:65px;height:21.5px;"><span style="color:#f0f0f0;font-size:11.15px;left:0.1px;top:3.8px">1.00 ns/</span></div>
<div class="box" style="left:117px;top:603px;width:132px;height:21.5px;"><span style="color:#f0f0f0;font-size:11.2px;left:0.1px;top:3.8px">1.0640 ns</span></div>
<div class="abs" style="left:253.100px;top:603.900px;width:19px;height:19px;border-radius:50%;background:radial-gradient(circle at 40% 30%,#c4bcb8 0%,#968e8a 55%,#6c6460 100%);"></div>
<div class="abs" style="left:279px;top:603.900px;width:19px;height:19px;border-radius:50%;background:radial-gradient(circle at 40% 30%,#c8c0bc 0%,#a0968f 55%,#70665f 100%);"></div>
<div class="abs" style="left:302.800px;top:603.900px;width:19px;height:19px;border-radius:50%;background:radial-gradient(circle at 40% 30%,#c4c4c4 0%,#9a9a9a 55%,#6a6a6a 100%);"></div>
<svg class="abs" style="left:0;top:0" width="820" height="630" viewBox="0 0 820 630">
<g fill="none" stroke="#8a8a8a" stroke-width="1.2"><path d="M8.5,612.5L13,618L8.5,623.5"/><path d="M12,612.5L16.500,618L12,623.5"/></g>
<circle cx="263.300" cy="612.400" r="5.500" fill="#f4f4f4" stroke="#2a2a2a" stroke-width="1.100"/>
<path d="M259.300,616.500L256.400,619.800" stroke="#2a2a2a" stroke-width="1.800"/>
<text x="263.300" y="615.200" text-anchor="middle" font-family="Liberation Sans, sans-serif" font-weight="bold" font-size="7.500" fill="#111">Z</text>
<path d="M286.300,607.300V620.300M291.500,607.300V620.300" stroke="#ff5a20" stroke-width="1.300" stroke-dasharray="1.500,1.200"/>
<circle cx="312.300" cy="613.400" r="7.300" fill="#fcfcfc" stroke="#3c3c3c" stroke-width="1.300"/>
<path d="M312.300,608.800V613.800H316.800" fill="none" stroke="#222" stroke-width="1.300"/>
<g fill="none" stroke="#cfcfcf" stroke-width="1.3"><path d="M327.500,607L332.500,613L327.500,619.300"/><path d="M332,607L337,613L332,619.300"/></g>
<g fill="none" stroke="#c4c4c4" stroke-width="1.100"><rect x="347.600" y="607" width="5" height="7.200"/><path d="M345,614.700H355.300M350.100,615.200V619.500"/></g>
<path d="M351.800,607.200V614.200" stroke="#c4c4c4" stroke-width="1.400"/>
</svg>
<!--BOTTOM-->
</div>
</div>
</body>
</html>
